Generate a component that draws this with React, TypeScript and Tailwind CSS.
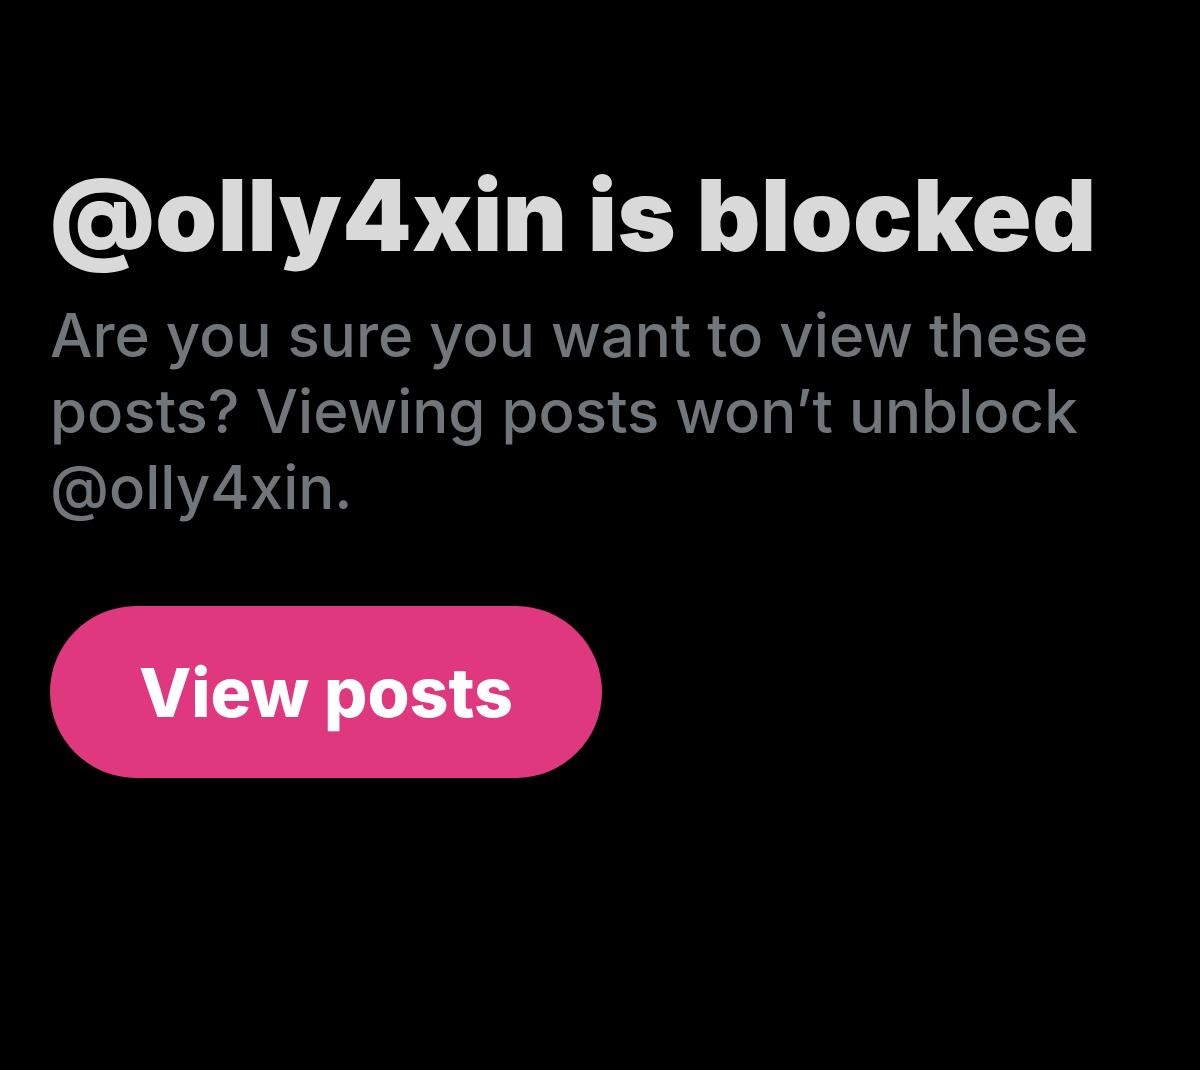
export default function App() {
  return (
    <div className="min-h-screen w-full bg-black font-['Inter',sans-serif]">
      <div className="flex flex-col px-[50px] pt-[160px]">
        <h1 className="text-[99px] font-black leading-[110px] tracking-[0.5px] text-[#d9d9d9]">
          @olly4xin is blocked
        </h1>
        <p className="mt-[27px] w-[1060px] text-[60px] font-medium leading-[76px] text-[#71767b]">
          Are you sure you want to view these posts? Viewing posts won’t unblock @olly4xin.
        </p>
        <button className="mt-[81px] flex h-[172px] w-[552px] items-center justify-center rounded-full bg-[#e0387f] text-[68px] font-extrabold text-white">
          View posts
        </button>
      </div>
    </div>
  );
}
